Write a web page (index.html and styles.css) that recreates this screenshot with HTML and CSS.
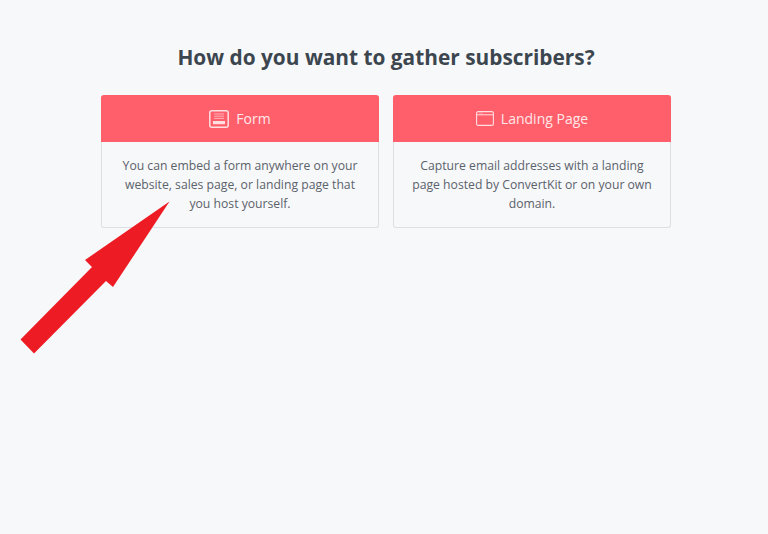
FILE: index.html
```html
<!DOCTYPE html>
<html lang="en">
<head>
    <meta charset="UTF-8">
    <meta name="viewport" content="width=device-width, initial-scale=1.0">
    <title>How do you want to gather subscribers?</title>
    <link rel="stylesheet" href="styles.css">
</head>
<body>
    <div class="page">
        <h1 class="page-title">How do you want to gather subscribers?</h1>
        <div class="choices">
            <div class="choice">
                <div class="choice-head">
                    <svg class="choice-icon" viewBox="0 0 20 18" width="20" height="18" aria-hidden="true">
                        <rect x="0.8" y="0.8" width="18.4" height="16.4" rx="2" fill="none" stroke="currentColor" stroke-width="1.5"/>
                        <path d="M5 4h10M5 6.2h10M5 8.4h10" stroke="currentColor" stroke-width="1" opacity="0.65"/>
                        <rect x="4" y="11" width="12" height="3.2" fill="currentColor"/>
                    </svg>
                    <span>Form</span>
                </div>
                <p class="choice-text">You can embed a form anywhere on your website, sales page, or landing page that you host yourself.</p>
            </div>
            <div class="choice">
                <div class="choice-head">
                    <svg class="choice-icon" viewBox="0 0 18 15" width="18" height="15" aria-hidden="true">
                        <rect x="0.6" y="0.6" width="16.8" height="13.8" rx="1.5" fill="none" stroke="currentColor" stroke-width="1.1"/>
                        <path d="M1 3.8h16" stroke="currentColor" stroke-width="1"/>
                        <path d="M3 2.2h4" stroke="currentColor" stroke-width="0.8" opacity="0.5"/>
                    </svg>
                    <span>Landing Page</span>
                </div>
                <p class="choice-text">Capture email addresses with a landing page hosted by ConvertKit or on your own domain.</p>
            </div>
        </div>
    </div>
    <svg class="arrow" viewBox="0 0 768 534" width="768" height="534" aria-hidden="true">
        <polygon points="169.5,201.5 85,260 92,267 20.5,339.5 34,353.5 106,281 113,287" fill="#ed1c24"/>
    </svg>
</body>
</html>
```

FILE: styles.css
```css
html, body {
    margin: 0;
    height: 100%;
}

body {
    background: #f7f8fa;
    font-family: "Open Sans", "Liberation Sans", sans-serif;
    overflow: hidden;
}

.page {
    width: 570px;
    margin-left: 101px;
    padding-top: 43px;
}

.page-title {
    margin: 0 0 23px;
    font-size: 20.85px;
    line-height: 29px;
    font-weight: 700;
    color: #3c464f;
    text-align: center;
}

.choices {
    display: grid;
    grid-template-columns: 278px 278px;
    gap: 14px;
}

.choice {
    border: 1px solid #dcdfe3;
    border-top: 0;
    border-radius: 3px;
    height: 133px;
    box-sizing: border-box;
}

.choice-head {
    display: flex;
    align-items: center;
    justify-content: center;
    gap: 7px;
    height: 47px;
    margin: 0 -1px;
    background: #ff5f6b;
    border-radius: 3px 3px 0 0;
    color: #fff;
    font-size: 14px;
}

.choice-head span {
    opacity: 0.85;
}

.choice-icon {
    opacity: 0.8;
}

.choice-text {
    margin: 0;
    padding: 14px 16px 0;
    font-size: 12.2px;
    line-height: 19px;
    color: #5b626a;
    text-align: center;
}

.arrow {
    position: absolute;
    left: 0;
    top: 0;
}
```
